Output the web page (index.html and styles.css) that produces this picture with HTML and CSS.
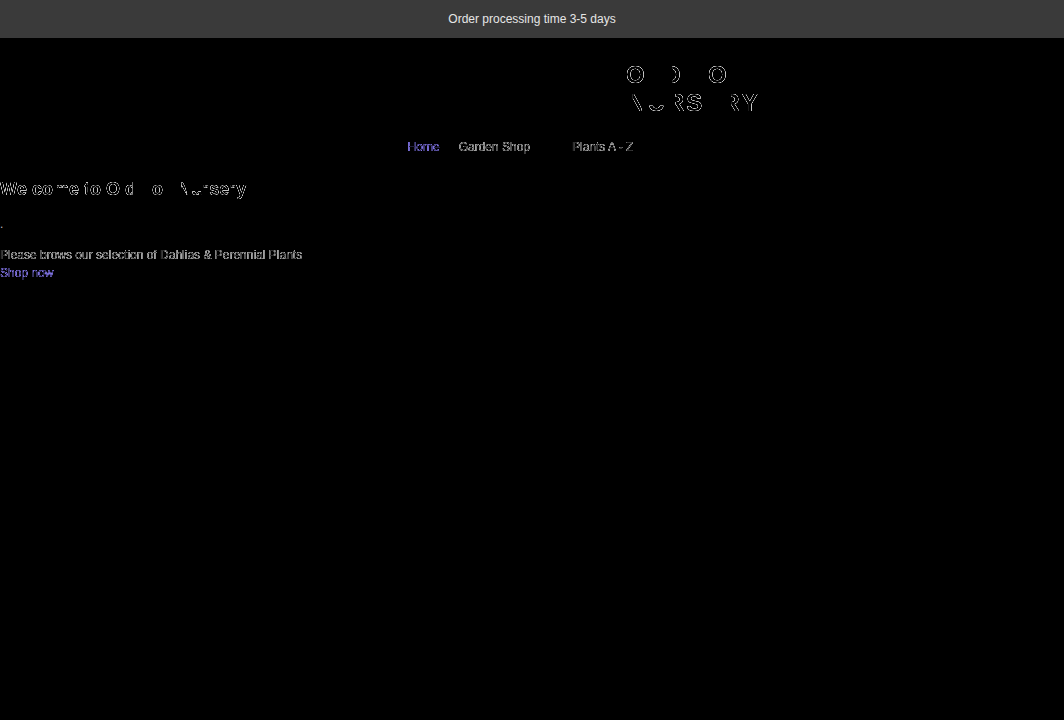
FILE: index.html
```
<!DOCTYPE html>
<html lang="en">
<head>
<meta charset="utf-8">
<meta name="viewport" content="width=device-width,initial-scale=1.0">
<title>Old Toll Nursery</title>
<link rel="stylesheet" href="styles.css">
</head>

<body>
<svg class="filters" aria-hidden="true">
    <!-- keeps the half covered pixels of each glyph -->
    <filter id="outline" color-interpolation-filters="sRGB" x="0" y="0" width="100%" height="100%">
        <feComponentTransfer>
            <feFuncA type="table" tableValues="0 .5 .9 .8 .6 .25"/>
        </feComponentTransfer>
    </filter>
    <filter id="thin" color-interpolation-filters="sRGB" x="0" y="0" width="100%" height="100%">
        <feComponentTransfer>
            <feFuncA type="table" tableValues="0 .6 .9 .9 .6 0"/>
        </feComponentTransfer>
    </filter>
</svg>
<div class="notice">Order processing time 3-5 days</div>
<header class="header">
    <a class="logo" href="#">O<span class="flat">L</span><span class="right">D</span> <span class="flat">T</span>O<span class="flat">LL</span><br><span class="slant">N</span><span class="low">U</span><span class="right">R</span>S<span class="flat">E</span><span class="right">R</span>Y</a>
</header>
<nav class="nav">
    <ul class="menu">
        <li><a class="active" href="#">Home</a></li>
        <li class="has-sub"><a href="#">Garden Shop</a></li>
        <li class="has-sub"><a href="#">Plants A - Z</a></li>
    </ul>
</nav>
<main class="intro">
    <h1>We<span class="flat">l</span>co<span class="high">m</span>e <span class="left">t</span>o O<span class="flat">l</span><span class="left">d</span> <span class="flat">T</span>o<span class="flat">ll</span> <span class="slant">N</span><span class="low">u</span><span class="high">r</span>se<span class="high">r</span>y</h1>
    <p class="dot">.</p>
    <p class="text">Please brows our selection of Dahlias &amp; Perennial Plants</p>
    <a class="shop" href="#">Shop now</a>
</main>
</body>
</html>
```
FILE: styles.css
```
*{padding:0;margin:0;box-sizing:border-box;}
li{list-style:none;}
a{text-decoration:none;color:inherit;}
body{
    background:#000;
    color:#bbb;
    font-family:"Liberation Sans",Arial,sans-serif;
    font-size:12px;
    line-height:18px;
}
.filters{
    position:absolute;
    width:0;
    height:0;
}
.notice{
    padding:10px;
    background:#3a3a3a;
    color:#e6e6e6;
    text-align:center;
}
.header{
    padding:23px 0 21px 324px;
    text-align:center;
}
.logo{
    display:inline-block;
    color:#ddd;
    font-size:24px;
    font-weight:bold;
    font-kerning:none;
    line-height:28px;
    letter-spacing:2px;
    filter:url(#thin);
}
/* straight strokes stay black, only the round or slanted part shows */
.flat{
    color:#000;
}
.right,.left,.low,.high,.slant{
    display:inline-block;
}
.right{
    clip-path:inset(0 0 0 45%);
}
.left{
    clip-path:inset(0 35% 0 0);
}
.low{
    clip-path:inset(60% 0 0 0);
}
.high{
    clip-path:inset(0 0 55% 25%);
}
.slant{
    clip-path:polygon(24% 15%,40% 15%,70% 75%,70% 85%,54% 85%,24% 35%);
}
.menu{
    display:flex;
    justify-content:center;
    gap:19px;
}
.menu a{
    display:block;
    filter:url(#outline);
}
.menu .has-sub{
    padding-right:23px;
}
.menu .active,.shop{
    color:#8f80ff;
}
.intro{
    padding-top:21px;
}
.intro h1{
    color:#ddd;
    font-size:18px;
    font-kerning:none;
    line-height:24px;
    filter:url(#thin);
}
.intro .dot{
    padding:14px 0 13px;
}
.intro .text,.intro .shop{
    display:block;
    filter:url(#outline);
}
```
